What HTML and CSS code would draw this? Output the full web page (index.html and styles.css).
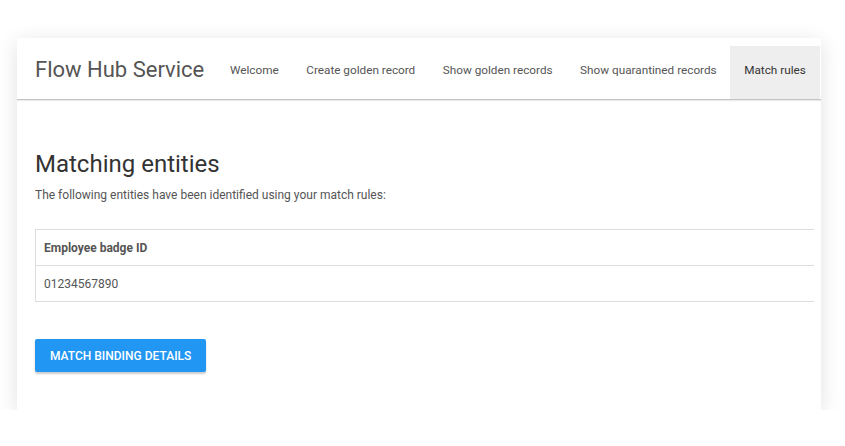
FILE: index.html
```html
<!DOCTYPE html>
<html lang="en">
<head>
    <meta charset="UTF-8">
    <meta name="viewport" content="width=device-width, initial-scale=1.0">
    <title>Flow Hub Service</title>
    <link rel="stylesheet" href="styles.css">
</head>
<body>
    <div class="card">
        <!-- Top navigation -->
        <header class="navbar">
            <div class="brand">Flow Hub Service</div>
            <nav>
                <ul>
                    <li><a href="#">Welcome</a></li>
                    <li><a href="#">Create golden record</a></li>
                    <li><a href="#">Show golden records</a></li>
                    <li><a href="#">Show quarantined records</a></li>
                    <li class="active"><a href="#">Match rules</a></li>
                </ul>
            </nav>
        </header>

        <section class="content">
            <h1>Matching entities</h1>
            <p>The following entities have been identified using your match rules:</p>

            <table class="entities">
                <thead>
                    <tr><th>Employee badge ID</th></tr>
                </thead>
                <tbody>
                    <tr><td>01234567890</td></tr>
                </tbody>
            </table>

            <button class="btn">Match binding details</button>
        </section>
    </div>
</body>
</html>
```

FILE: styles.css
```css
body {
    margin: 0;
    font-family: Roboto, "Liberation Sans", Arial, sans-serif;
    color: #555;
    background: #fff;
}

.card {
    width: 804px;
    height: 372px;
    margin: 38px 0 0 17px;
    background: #fff;
    box-shadow: 0 4px 20px rgba(0, 0, 0, 0.12);
    overflow: hidden;
}

.navbar {
    display: flex;
    align-items: flex-end;
    height: 61px;
    border-bottom: 1px solid #c4c4c4;
    box-shadow: 0 1px 1px rgba(0, 0, 0, 0.08);
    white-space: nowrap;
}

.brand {
    flex-shrink: 0;
    font-size: 22px;
    color: #555;
    padding: 0 12px 5px 18px;
    height: 48px;
    line-height: 48px;
}

nav {
    flex-shrink: 0;
}

nav ul {
    list-style-type: none;
    margin: 0;
    padding: 0;
    display: flex;
}

nav ul li {
    flex-shrink: 0;
}

nav ul li a {
    display: block;
    padding: 0 13.75px 5px;
    height: 48px;
    line-height: 48px;
    font-size: 11.75px;
    color: #555;
    text-decoration: none;
}

nav ul li.active a {
    background: #eee;
    color: #333;
}

.content {
    padding: 49px 7px 0 18px;
}

.content h1 {
    margin: 0;
    font-size: 24px;
    font-weight: 400;
    color: #333;
    line-height: 30px;
}

.content p {
    margin: 7px 0 0;
    font-size: 12px;
    line-height: 18px;
    color: #555;
}

.entities {
    width: 100%;
    margin-top: 25px;
    border-collapse: collapse;
    font-size: 12px;
    color: #555;
}

.entities th,
.entities td {
    border: 1px solid #ddd;
    border-right: none;
    height: 35px;
    padding: 0 8px;
    text-align: left;
}

.entities th {
    font-weight: 700;
}

.btn {
    display: block;
    margin-top: 37px;
    height: 33px;
    padding: 0 15px;
    border: none;
    border-radius: 2px;
    background: #2196f3;
    color: #fff;
    font-family: inherit;
    font-size: 12px;
    font-weight: 500;
    text-transform: uppercase;
    box-shadow: 0 2px 2px rgba(0, 0, 0, 0.2);
}
```
